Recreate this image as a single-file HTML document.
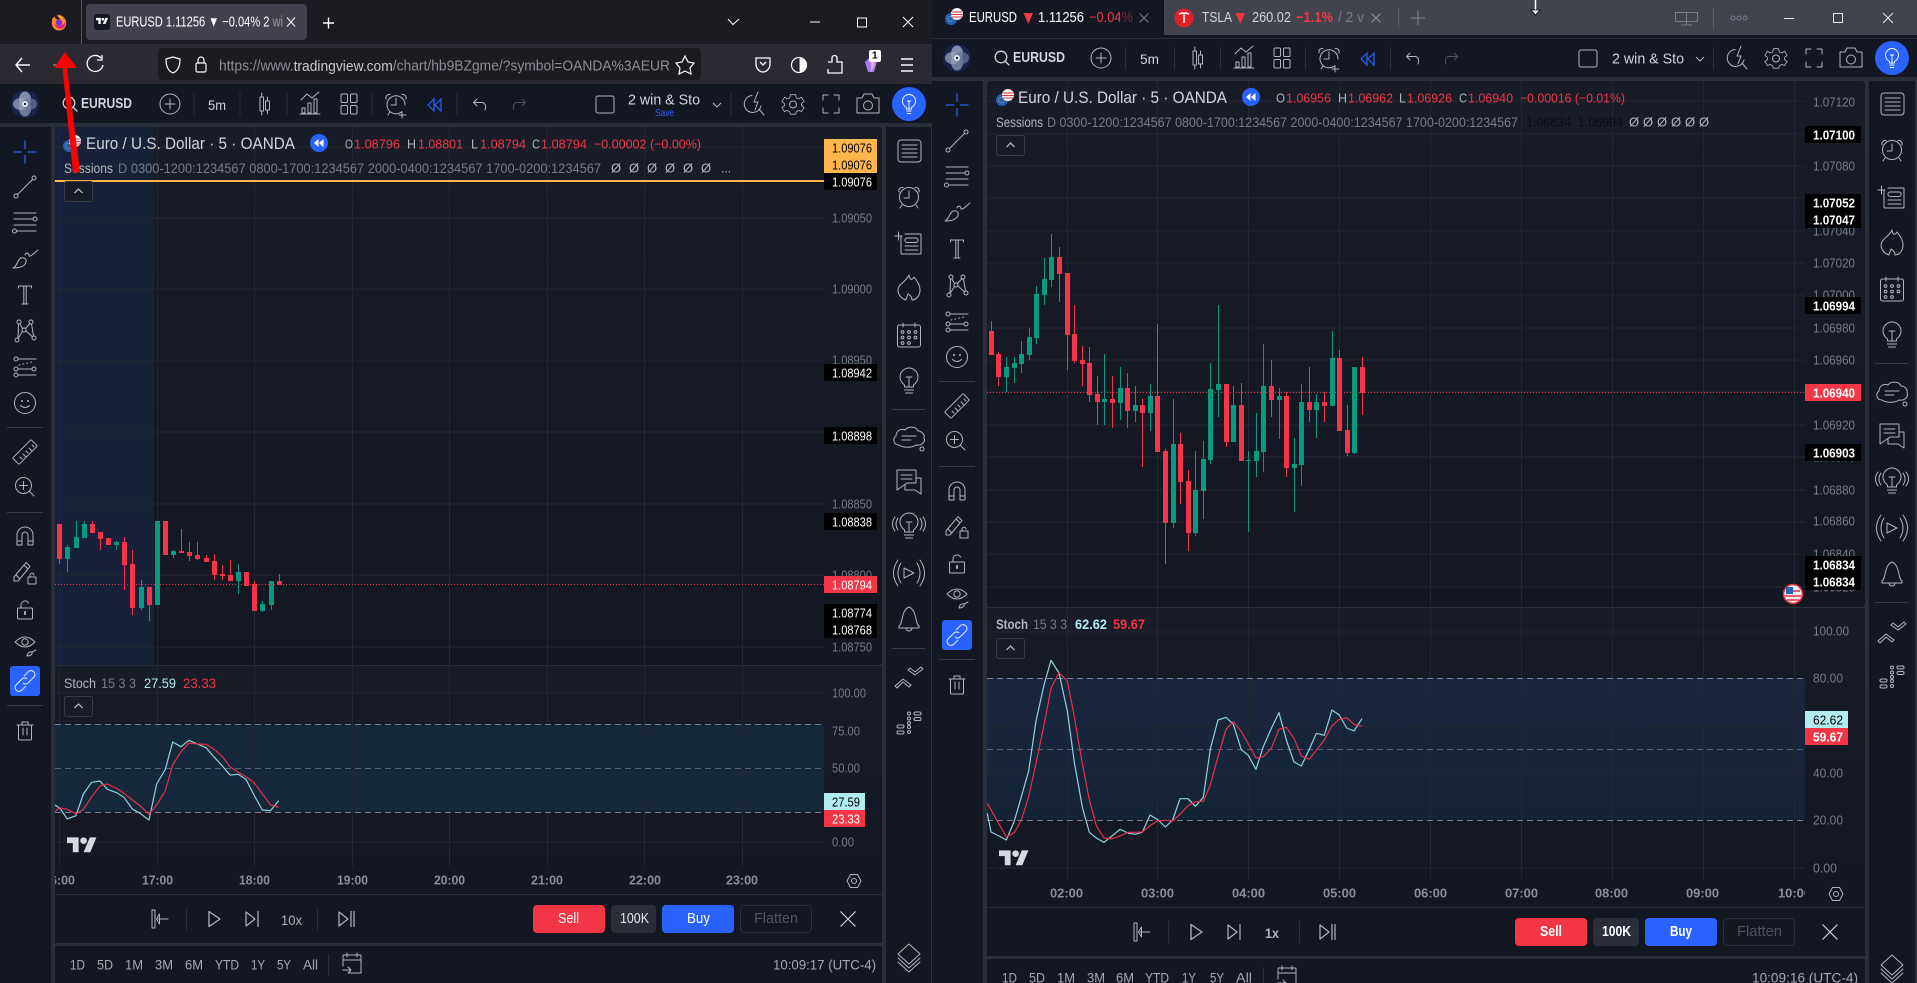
<!DOCTYPE html>
<html><head><meta charset="utf-8"><title>TradingView</title>
<style>
html,body{margin:0;padding:0;background:#131722;width:1917px;height:983px;overflow:hidden}
svg{display:block}
text{font-family:"Liberation Sans",sans-serif;font-size:13px;dominant-baseline:central;fill:#787b86;white-space:pre}
.i{fill:none;stroke:#b2b5be;stroke-width:1;stroke-linejoin:round;stroke-linecap:round}
.k{fill:#000}.wt{fill:#fff}.rd{fill:#f23645}.lt{fill:#b2b5be}.dk{fill:#131722}.tm{fill:#8b8e98;font-weight:bold}
.bb{fill:#a6a9b3;font-size:13.500px}
</style></head><body>
<svg width="1917" height="983" viewBox="0 0 1917 983" xmlns="http://www.w3.org/2000/svg">
<defs>
<linearGradient id="pg" x1="0" y1="0" x2="0" y2="1"><stop offset="0" stop-color="#181c27"/><stop offset="1" stop-color="#131722"/></linearGradient>
<linearGradient id="bd" x1="0" y1="0" x2="0" y2="1"><stop offset="0" stop-color="#18263f"/><stop offset="1" stop-color="#142434"/></linearGradient>
<g id="cross"><path fill="none" stroke="#2962ff" stroke-width="1.2" d="M-11.5 0H-3M3 0H11.5M0-11.5V-3M0 3V11.5"/></g>
<g id="line" class="i"><circle cx="-9" cy="9" r="2"/><circle cx="9" cy="-9" r="2"/><path d="M-7.6 7.6L7.6-7.6"/></g>
<g id="fib" class="i"><path d="M-11-9H11M-11-3H8M-11 3H11M-8 9H11"/><circle cx="10" cy="-3" r="2"/><circle cx="-10.500" cy="9" r="2"/></g>
<g id="brush" class="i"><path d="M-12 8C-8 7-8 0-4-2C-1-3 2-1 1 2C0 6-4 8-12 8Z"/><path d="M0-5C1-8 4-7 4-4C6-3 9-7 13-10"/></g>
<g id="T" class="i"><path d="M-6.500-7V-9H6.500V-7M-1.200-9V9M1.200-9V9M-3 9H3"/></g>
<g id="patt" class="i"><circle cx="-8" cy="10" r="2"/><circle cx="-6" cy="-8" r="2"/><circle cx="6" cy="-8" r="2"/><circle cx="9" cy="8" r="2"/><circle cx="-1" cy="0" r="2"/><path d="M-7 8L-6.500-6M-5-6L-2.500-1.500M-7 8.500L-2.500 1.500M.5-1.500L5-6.500M.8 .8L7.500 7M6.500-6L8.500 6"/></g>
<g id="fore" class="i"><circle cx="-9" cy="-8" r="2"/><circle cx="-9" cy="2" r="2"/><circle cx="-9" cy="8" r="2"/><circle cx="9" cy="2" r="2"/><path d="M-7-8H11M-7 2H7M-7 8H11"/><path stroke-dasharray="1 3" d="M-6-2L7-5"/></g>
<g id="smile" class="i"><circle r="10.500"/><path d="M-4.500 2.500Q0 6.500 4.500 2.500"/><circle cx="-3" cy="-2" r=".5"/><circle cx="3" cy="-2" r=".5"/></g>
<g id="ruler" class="i"><rect x="-13" y="-4.500" width="26" height="9" rx="1" transform="rotate(-45)"/><path d="M-5 5L-3 7M-2 2L1 5M1-1L3 1M4-4L7-1M7-7L9-5"/></g>
<g id="zoom" class="i"><circle cx="-1.500" cy="-1.500" r="8"/><path d="M4.500 4.500L9 9M-5.500-1.500H2.500M-1.500-5.500V2.500"/></g>
<g id="mag" class="i"><path d="M-8 9V-1A8 8 0 0 1 8-1V9H3V-1A3 3 0 0 0-3-1V9ZM-8 5H-3M3 5H8"/></g>
<g id="plock" class="i"><path d="M-11 5L-11 9L-7 9L3-3L-1-7ZM-9 3L-5 7M-1-7L1-9.500L5-5.500L3-3"/><rect x="3" y="5" width="8" height="7"/><path d="M5 5V3.500A2 2 0 0 1 9 3"/></g>
<g id="lock" class="i"><rect x="-7.500" y="-2" width="15" height="11" rx="1"/><path d="M-4-2V-5A4 4 0 0 1 3.500-7"/><path d="M0 2V4" stroke-width="2"/></g>
<g id="eye" class="i"><path d="M-10-3Q0-13 10-3Q0 7-10-3Z"/><circle cy="-3" r="3.200"/><path d="M2 11Q3 6 7 7L7 9Q5 11 2 11ZM7 7L11 5"/></g>
<g id="link" fill="none" stroke="#fff" stroke-opacity=".85" stroke-width="1.1"><path d="M-1-5L3-9A3.500 3.500 0 0 1 9-4L3 2A3.500 3.500 0 0 1-2 2"/><path d="M1 5L-3 9A3.500 3.500 0 0 1-9 4L-3-2A3.500 3.500 0 0 1 2-2"/></g>
<g id="trash" class="i"><path d="M-8-6H8M-3-6V-9H3V-6M-6.500-6V8A1 1 0 0 0-5.500 9H5.500A1 1 0 0 0 6.500 8V-6M-2-3V4M2-3V4"/></g>
<g id="wl" class="i"><rect x="-11" y="-11" width="23" height="22" rx="3"/><path d="M-7-6H8M-7-2H8M-7 2H8M-7 6H8"/></g>
<g id="alarm" class="i"><circle cy="0" r="9.500"/><path d="M0-6V1H-5M-10-5A3.500 3.500 0 0 1-6-9.500M10-5A3.500 3.500 0 0 0 6-9.500M-7 8L-9 11M7 8L9 11"/></g>
<g id="note" class="i"><path d="M-8-7V10A1 1 0 0 0-7 11H11A1 1 0 0 0 12 10V-8A1 1 0 0 0 11-9H-4"/><rect x="-4" y="-5" width="13" height="4.500" rx="2"/><path d="M-4 3H9M-4 7H9M-14-7H-7M-10.500-11V-3"/></g>
<g id="fire" class="i"><path d="M0-13C1-7 3-8 5-11C8-7 11-3 11 2C11 8 7 12 3 12C3 9 1 7-1 6C-2 9-3 11-3 12C-7 11-11 7-11 2C-11-4-3-6 0-13Z"/></g>
<g id="cal" class="i"><rect x="-11.500" y="-10" width="23" height="22" rx="2"/><path d="M-6-12V-8M6-12V-8"/><circle cx="-6.500" cy="-3" r="1.400"/><circle cy="-3" r="1.400"/><circle cx="6.500" cy="-3" r="1.400"/><circle cx="-6.500" cy="2.500" r="1.400"/><circle cy="2.500" r="1.400"/><circle cx="6.500" cy="2.500" r="1.400"/><circle cx="-6.500" cy="8" r="1.400"/><circle cy="8" r="1.400"/></g>
<g id="bulb" class="i"><path d="M-4.500 6V4C-7 2-9-1-9-4A9 9 0 0 1 9-4C9-1 7 2 4.500 4V6ZM-4.500 9H4.500M-3.500 12H3.500M-3-4H3M0-4V6"/></g>
<g id="cloud" class="i"><path d="M-10 8C-15 8-17 2-13-1C-13-6-8-9-4-7C-1-11 7-11 9-6C13-6 16-2 15 1C17 5 12 9 7 8C3 11-6 11-10 8Z"/><path d="M-7-1H7M-7 3H2"/><circle cx="13" cy="12" r="2"/></g>
<g id="chat" class="i"><path d="M-12-12H6A1 1 0 0 1 7-11V1H-2L-12 8Z"/><path d="M-8-7H3M-8-3H3M7-4H12V12L6 8H-4V3"/></g>
<g id="bulbw" class="i"><use href="#bulb" transform="translate(0,-1)"/><path d="M-11-9Q-15-3-11 3M-14-10Q-19-3-14 4M11-9Q15-3 11 3M14-10Q19-3 14 4"/></g>
<g id="playw" class="i"><path d="M-5-5V5L5 0Z"/><path d="M-8-10Q-14 0-8 10M-11-13Q-20 0-11 13M8-10Q14 0 8 10M11-13Q20 0 11 13"/></g>
<g id="bell" class="i"><path d="M-10 9H10V7C6 5 8-9 0-12C-8-9-6 5-10 7ZM-3 9A3 3 0 0 0 3 9"/></g>
<g id="chev" class="i"><path d="M-14 9L-6 2L2 8L0 10L-6 5L-12 11ZM-1-7L6-2L14-8L12-10L6-5L1-9Z"/></g>
<g id="dots" class="i"><rect x="-12" y="2" width="7" height="3" rx="1.500"/><rect x="-12" y="8" width="7" height="3" rx="1.500"/><circle cx="0" cy="-9.500" r="1.500"/><circle cx="0" cy="-4.500" r="1.500"/><circle cx="0" cy="0" r="1.500"/><circle cx="0" cy="4" r="1.500"/><circle cx="0" cy="9" r="1.500"/><rect x="5" y="-11" width="7" height="3" rx="1.500"/><rect x="5" y="-5.500" width="7" height="3" rx="1.500"/></g>
<g id="layers" class="i"><path d="M0-13L11-3L0 7L-11-3ZM-11 1L0 11L11 1M-11 5L0 15L11 5"/></g>
<g id="hex" class="i"><path d="M-7 0L-3.500-6.500H3.500L7 0L3.500 6.500H-3.500Z" /><circle r="2.500"/></g>
<g id="collapse"><rect x=".5" y=".5" width="28" height="20" rx="2" fill="#181c27" stroke="#363a45"/><path d="M10.500 12L14.500 8L18.500 12" fill="none" stroke="#b2b5be" stroke-width="1.300"/></g>
<g id="rewind"><circle r="9" fill="#2962ff"/><path d="M-.5-4L-5 0L-.5 4ZM4.500-4L0 0L4.500 4Z" fill="#fff"/></g>
<g id="flag"><circle cx="-3" cy="2" r="6" fill="#1f5fb4"/><circle cx="-3.500" cy="2" r="2.800" fill="none" stroke="#e3c52f" stroke-width=".8" stroke-dasharray="1 1.200"/><circle cx="3" cy="-3" r="6" fill="#f7f7f7"/><path d="M-2-5H8M-3-2.500H9M-2 0H8" stroke="#e5343f" stroke-width="1.100"/></g>
<g id="logo"><circle r="14" fill="#18224a"/><ellipse cy="-4.500" rx="6" ry="8" fill="#828ba8"/><ellipse cy="4.500" rx="6" ry="8" fill="#707a9b"/><ellipse cx="-4.500" rx="7.500" ry="6" fill="#a1a9c0" fill-opacity=".7"/><ellipse cx="4.500" rx="7.500" ry="6" fill="#6c7698" fill-opacity=".7"/><circle r="3" fill="#e6e9f2"/><circle r="1.200" fill="#18224a"/></g>
<g id="search" class="i"><circle cx="-1" cy="-1" r="5.800" stroke="#d1d4dc" stroke-width="1.300"/><path d="M3.200 3.200L7 7" stroke="#d1d4dc" stroke-width="1.300"/></g>
<g id="plusc" class="i"><circle r="10"/><path d="M-5 0H5M0-5V5"/></g>
<g id="candle" class="i"><rect x="-4" y="-7" width="3.500" height="14"/><rect x="1.500" y="-3" width="4" height="9" /><path d="M-2.200-11V-7M-2.200 7V11M3.500-7V-3M3.500 6V10"/></g>
<g id="indi" class="i"><path d="M-10-4L-4-10L1-6L8-12M-9 9V4H-6V9ZM-3 9V-1H0V9ZM3 9V-5H6V9ZM-11 10H9" /></g>
<g id="lay" class="i"><rect x="-8" y="-10" width="6.500" height="8.500" rx="1"/><rect x="1.500" y="-10" width="6.500" height="8.500" rx="1"/><rect x="-8" y="1.500" width="6.500" height="8.500" rx="1"/><rect x="1.500" y="1.500" width="6.500" height="8.500" rx="1"/></g>
<g id="alert" class="i"><path d="M6 7.500A9 9 0 1 1 9 1M0-6V1H-5M-10-5A3.500 3.500 0 0 1-6-9.500M10-5A3.500 3.500 0 0 0 6-9.500M-6 8L-8 11M6 8V14M3 11H10"/></g>
<g id="rep" fill="none" stroke="#2962ff" stroke-width="1.200"><path d="M-1-6L-7 0L-1 6ZM6-6L0 0L6 6Z"/></g>
<g id="undo" class="i"><path d="M-3-5L-6.500-1.500L-3 2M-6.500-1.500H2C5-1.500 6.500 2 5 6"/></g>
<g id="redo" fill="none" stroke="#50535e" stroke-width="1"><path d="M3-5L6.500-1.500L3 2M6.500-1.500H-2C-5-1.500-6.500 2-5 6"/></g>
<g id="flash" class="i"><path d="M7 2A8.500 8.500 0 1 1-2-8.500M4-12L0-2H4L1 6M5 5L10 11"/></g>
<g id="gear" class="i"><path d="M-3-11H3L4-7L7-6L10-8L13-3L10-.5V2L13 4L10 9L7 7.500L4 9L3 12H-3L-4 9L-7 7.500L-10 9L-13 4L-10 2V-.5L-13-3L-10-8L-7-6L-4-7Z" transform="scale(.85)"/><circle cy=".5" r="3.500"/></g>
<g id="full" class="i"><path d="M-8-4V-9H-3M3-9H8V-4M8 4V9H3M-3 9H-8V4"/></g>
<g id="cam" class="i"><path d="M-11-6H-6L-4-10H4L6-6H11V9H-11Z"/><circle cy="1.500" r="4.500"/></g>
<g id="bulbb"><circle r="17" fill="#2962ff"/><path d="M-2.500 5V3.500C-5 2-6.500-.5-6.500-3A6.500 6.500 0 0 1 6.500-3C6.500-.5 5 2 2.500 3.500V5ZM-2.500 7H2.500M-2 9.500H2M-2-3H2M0-3V5" fill="none" stroke="#fff" stroke-width=".9"/></g>
<g id="rp1" class="i"><rect x="-8" y="-9" width="3" height="18" /><path d="M-.5-5L-3.500 0L-.5 5ZM-2 0H8"/></g>
<g id="rp2" class="i"><path d="M-5-7.500V7.500L6 0Z" stroke-width="1.300"/></g>
<g id="rp3" class="i"><path d="M-6-7V7L3 0ZM6-7.500V7.500" stroke-width="1.200"/></g>
<g id="rp4" class="i"><path d="M-7-7V7L2 0ZM5-7.500V7.500M8-7.500V7.500" stroke-width="1.200"/></g>
<g id="xx"><path d="M-7.500-7.500L7.500 7.500M7.500-7.500L-7.500 7.500" fill="none" stroke="#d1d4dc" stroke-width="1.200"/></g>
<g id="calb" class="i"><path d="M-8-9H8A1 1 0 0 1 9-8V9H-4M-9 2V-8A1 1 0 0 1-8-9M-9-4H9M-5-11V-7M5-11V-7M-9 6H-1M-4 3L-1 6L-4 9"/></g>
<g id="tv"><path d="M14 22H7V11H0V4h14v18zM28 22h-8l7.500-18h8L28 22z"/><circle cx="20" cy="8" r="4"/></g>
</defs>

<!-- LEFT WINDOW BASE -->
<rect width="932" height="983" fill="#2a2e39"/>
<rect width="932" height="44" fill="#1c1b22"/>
<rect y="44" width="932" height="40" fill="#2b2a33"/>
<rect y="84" width="932" height="39" fill="#131722"/>
<rect y="127" width="51" height="856" fill="#131722"/>
<rect x="886" y="127" width="45" height="856" fill="#131722"/>

<!-- browser tabs -->
<rect x="81" y="0" width="1" height="44" fill="#55545c"/>
<g transform="translate(59,22.500)"><path d="M-7-2C-8 3-5 8 0 8C5 8 8 4 7-1C6-5 3-7 0-8C2-5 1-3-1-3C-3-3-4-4-4-6C-6-5-7-4-7-2Z" fill="#ff8a2c"/><path d="M-5 1C-4 5 0 7 3 6C6 5 7 2 6-1C5 2 2 3-1 3C-3 3-4 2-5 1Z" fill="#d92d7a"/><circle cx="0" cy="0" r="3.200" fill="#7b2fd4"/><path d="M-2-8C-1-5 1-4 3-4C2-6 0-7-2-8Z" fill="#ffc53a"/></g>
<rect x="86" y="4" width="221" height="36" rx="4" fill="#42414d"/>
<rect x="94" y="14" width="16" height="16" rx="3" fill="#131722"/>
<use href="#tv" transform="translate(96,16.500) scale(.34)" fill="#fff"/>
<text x="116" y="22.500" textLength="167" lengthAdjust="spacingAndGlyphs" style="fill:#fbfbfe;font-size:14.500px">EURUSD 1.11256 ▼ −0.04% 2 wi</text>
<rect x="270" y="8" width="15" height="28" fill="#42414d" fill-opacity=".55"/>
<path d="M287 17.500L295 26.500M295 17.500L287 26.500" stroke="#fbfbfe" stroke-width="1"/>
<path d="M323 23H334M328.500 17.500V28.500" stroke="#fbfbfe" stroke-width="1.400"/>
<path d="M728 19L733 24.500L739 19" fill="none" stroke="#fbfbfe" stroke-width="1"/>
<path d="M810 22H820" stroke="#fbfbfe" stroke-width="1"/>
<rect x="857.500" y="18" width="9" height="9" fill="none" stroke="#fbfbfe"/>
<path d="M903 17L913 27M913 17L903 27" stroke="#fbfbfe"/>

<!-- nav bar -->
<path d="M30 65H16M22 58L16 65L22 72" fill="none" stroke="#fbfbfe" stroke-width="1.400"/>
<path d="M53 65H66" stroke="#8b8a92" stroke-width="1.400"/>
<path d="M101 58A8 8 0 1 0 103 65M102 55V60H97" fill="none" stroke="#fbfbfe" stroke-width="1.300"/>
<rect x="158" y="48" width="543" height="32" rx="4" fill="#1c1b22"/>
<path d="M173 57L180 59C180 66 178 71 173 73C168 71 166 66 166 59Z" fill="none" stroke="#fbfbfe" stroke-width="1.200"/>
<rect x="196" y="63" width="10" height="9" rx="1.500" fill="none" stroke="#fbfbfe" stroke-width="1.200"/><path d="M198 63V60A3 3 0 0 1 204 60V63" fill="none" stroke="#fbfbfe" stroke-width="1.200"/>
<text x="219" y="66" textLength="451" lengthAdjust="spacingAndGlyphs" style="fill:#8e8d94;font-size:15px">https://www.<tspan style="fill:#c8c8cc">tradingview.com</tspan>/chart/hb9BZgme/?symbol=OANDA%3AEUR</text>
<path d="M685 56L688 62L694 63L690 68L691 74L685 71L679 74L680 68L676 63L682 62Z" fill="none" stroke="#fbfbfe" stroke-width="1.200"/>
<path d="M756 58H770V64C770 69 766 72 763 72C760 72 756 69 756 64Z" fill="none" stroke="#fbfbfe" stroke-width="1.300"/><path d="M760 62L763 65L766 62" fill="none" stroke="#fbfbfe" stroke-width="1.300"/>
<circle cx="799" cy="65" r="7.500" fill="none" stroke="#fbfbfe" stroke-width="1.200"/><path d="M799 58A7 7 0 0 1 799 72Z" fill="#fbfbfe"/><path d="M799 58V72" stroke="#1c1b22"/>
<path d="M828 62H832V58A2 2 0 0 1 837 58V62H842V73H828V69" fill="none" stroke="#fbfbfe" stroke-width="1.300"/>
<path d="M871 56L877 62L874 72L868 72L865 62Z" fill="#a37df0"/><path d="M871 58L875 64L871 72Z" fill="#f0a9d8"/>
<rect x="869" y="50" width="12" height="12" rx="2" fill="#fff"/><text x="872" y="56" style="fill:#000;font-size:10px;font-weight:bold">1</text>
<path d="M901 59H913M901 65H913M901 71H913" stroke="#fbfbfe" stroke-width="1.400"/>

<!-- top bar left -->
<use href="#logo" x="25" y="104"/>
<use href="#search" x="70" y="104"/>
<text x="81" y="104" textLength="51" lengthAdjust="spacingAndGlyphs" style="fill:#d1d4dc;font-size:14.500px;font-weight:bold">EURUSD</text>
<use href="#plusc" x="170" y="104"/>
<path d="M194 93V116M240 93V116M287 93V116M372 93V116M457 93V116M731 93V116" stroke="#2a2e39"/>
<text x="208" y="105" textLength="18" lengthAdjust="spacingAndGlyphs" style="fill:#d1d4dc;font-size:14px">5m</text>
<use href="#candle" x="264" y="104"/><use href="#indi" x="311" y="104"/><use href="#lay" x="349" y="104"/><use href="#alert" x="396" y="104"/><use href="#rep" x="435" y="105"/><use href="#undo" x="480" y="104"/><use href="#redo" x="519" y="104"/>
<rect x="596" y="96" width="18" height="17" rx="2" fill="none" stroke="#b2b5be"/>
<text x="628" y="100" textLength="72" lengthAdjust="spacingAndGlyphs" style="fill:#d1d4dc;font-size:15px">2 win &amp; Sto</text>
<text x="655" y="113" textLength="19" lengthAdjust="spacingAndGlyphs" style="fill:#2962ff;font-size:10.500px">Save</text>
<path d="M713 103L717 107L721 103" fill="none" stroke="#b2b5be"/>
<use href="#flash" x="754" y="104"/><use href="#gear" x="793" y="104"/><use href="#full" x="831" y="104"/><use href="#cam" x="868" y="104"/><use href="#bulbb" x="909" y="104"/>

<!-- LEFT CHART -->
<rect x="55" y="127" width="827" height="538" rx="3" fill="url(#pg)"/>
<rect x="55" y="666" width="827" height="228" fill="#131722"/>
<rect x="55" y="666" width="827" height="200" fill="url(#pg)"/>
<rect x="55" y="127" width="99" height="538" fill="#17223a"/>
<rect x="55" y="724" width="769" height="88" fill="#15273a"/>
<path d="M55 147H824M55 218H824M55 289H824M55 361H824M55 432H824M55 504H824M55 575H824M55 647H824M55 693H824M55 730H824M55 805H824M55 842H824" stroke="#232733" shape-rendering="crispEdges"/>
<path d="M59.500 127V866M157.500 127V866M254.500 127V866M352.500 127V866M449.500 127V866M547.500 127V866M644.500 127V866M742.500 127V866" stroke="#232733" shape-rendering="crispEdges"/>
<path d="M55 665.500H882M55 894.500H882" stroke="#2a2e39" shape-rendering="crispEdges"/>
<path d="M55 724.500H824M55 812.500H824" stroke="#7d808a" stroke-dasharray="6 4" shape-rendering="crispEdges"/>
<path d="M55 768.500H824" stroke="#5a6170" stroke-dasharray="6 4" shape-rendering="crispEdges"/>
<path d="M55 181H824" stroke="#ffb74d" stroke-width="2" shape-rendering="crispEdges"/>
<path d="M55 584.500H824" stroke="#f23645" stroke-dasharray="1 2" shape-rendering="crispEdges"/>
<g transform="translate(40,500) scale(.33333)" fill="none" shape-rendering="crispEdges">
<path stroke="#f5344a" stroke-width="3" d="M58 72V192M157 63V99M181 96V150M253 111V270M277 150V345M328 261V363M424 87V159M448 126V183M472 126V180M499 165V186M523 162V240M547 195V240M571 180V243M643 243V333M718 222V255"/>
<path stroke="#f5344a" stroke-width="15" d="M58 72V177M157 72V99M181 96V117M205 114V135M253 126V195M277 192V324M328 261V315M376 63V165M424 153V159M448 156V168M472 165V177M499 174V186M523 183V225M547 222V228M571 225V243M619 216V258M643 252V333M718 243V255"/>
<path stroke="#089981" stroke-width="3" d="M82 135V216M109 63V144M133 63V114M229 123V150M304 240V330M400 150V174M595 192V282M667 303V336M694 243V330"/>
<path stroke="#089981" stroke-width="15" d="M82 141V177M109 111V144M133 72V114M229 126V135M304 261V324M352 63V315M400 153V165M595 216V243M667 312V333M694 243V315"/>
</g>
<g transform="translate(0,480) scale(.33333)" fill="none" stroke-width="3.600" stroke-linejoin="round">
<polyline stroke="#8fd3dc" points="165,975 180,985 202,1017 228,1007 250,942 275,907 300,903 322,928 350,938 372,952 397,987 420,1000 447,1020 470,912 496,868 518,786 543,800 567,781 592,792 618,803 643,832 667,858 690,885 715,883 738,898 762,945 787,990 812,992 836,962"/>
<polyline stroke="#e83047" points="165,995 178,983 202,988 228,1002 250,988 275,950 300,918 322,912 350,925 372,940 397,960 420,977 447,1003 470,975 496,932 518,855 543,815 567,789 592,792 618,793 643,808 667,830 690,860 715,877 738,890 762,908 787,942 812,975 836,982"/>
</g>
<!-- legend L -->
<use href="#flag" x="72" y="144"/>
<text x="86" y="144" textLength="209" lengthAdjust="spacingAndGlyphs" style="fill:#d1d4dc;font-size:16.500px">Euro / U.S. Dollar · 5 · OANDA</text>
<use href="#rewind" x="319" y="143"/>
<text x="345" y="144" class="lt" textLength="8" lengthAdjust="spacingAndGlyphs">O</text><text x="354" y="144" class="rd" textLength="46" lengthAdjust="spacingAndGlyphs">1.08796</text>
<text x="407" y="144" class="lt" textLength="9" lengthAdjust="spacingAndGlyphs">H</text><text x="418" y="144" class="rd" textLength="45" lengthAdjust="spacingAndGlyphs">1.08801</text>
<text x="471" y="144" class="lt" textLength="7" lengthAdjust="spacingAndGlyphs">L</text><text x="480" y="144" class="rd" textLength="46" lengthAdjust="spacingAndGlyphs">1.08794</text>
<text x="532" y="144" class="lt" textLength="8" lengthAdjust="spacingAndGlyphs">C</text><text x="541" y="144" class="rd" textLength="46" lengthAdjust="spacingAndGlyphs">1.08794</text>
<text x="594" y="144" class="rd" textLength="107" lengthAdjust="spacingAndGlyphs">−0.00002 (−0.00%)</text>
<text x="64" y="168" class="lt" textLength="49" lengthAdjust="spacingAndGlyphs" style="font-size:14px">Sessions</text>
<text x="118" y="168" textLength="483" lengthAdjust="spacingAndGlyphs" style="font-size:14px">D 0300-1200:1234567 0800-1700:1234567 2000-0400:1234567 1700-0200:1234567</text>
<text x="611 620 629 638 647 656 665 674 683 692 701" y="168" class="lt">Ø Ø Ø Ø Ø Ø</text>
<text x="721" y="168" class="lt" textLength="10" lengthAdjust="spacingAndGlyphs">...</text>
<use href="#collapse" x="64" y="181"/>
<!-- prices L -->
<text x="832" y="218" textLength="40" lengthAdjust="spacingAndGlyphs">1.09050</text>
<text x="832" y="289" textLength="40" lengthAdjust="spacingAndGlyphs">1.09000</text>
<text x="832" y="360" textLength="40" lengthAdjust="spacingAndGlyphs">1.08950</text>
<text x="832" y="504" textLength="40" lengthAdjust="spacingAndGlyphs">1.08850</text>
<text x="832" y="575" textLength="40" lengthAdjust="spacingAndGlyphs">1.08800</text>
<text x="832" y="647" textLength="40" lengthAdjust="spacingAndGlyphs">1.08750</text>
<rect x="824" y="139" width="53" height="34" fill="#ffb74d"/>
<rect x="824" y="173" width="53" height="17" fill="#000"/>
<rect x="824" y="364" width="53" height="17" fill="#000"/>
<rect x="824" y="427" width="53" height="17" fill="#000"/>
<rect x="824" y="513" width="53" height="17" fill="#000"/>
<rect x="824" y="576" width="53" height="17" fill="#f23645"/>
<rect x="824" y="604" width="53" height="34" fill="#000"/>
<text x="832" y="148" class="k" textLength="40" lengthAdjust="spacingAndGlyphs">1.09076</text>
<text x="832" y="165" class="k" textLength="40" lengthAdjust="spacingAndGlyphs">1.09076</text>
<text x="832" y="182" class="wt" textLength="40" lengthAdjust="spacingAndGlyphs">1.09076</text>
<text x="832" y="373" class="wt" textLength="40" lengthAdjust="spacingAndGlyphs">1.08942</text>
<text x="832" y="436" class="wt" textLength="40" lengthAdjust="spacingAndGlyphs">1.08898</text>
<text x="832" y="522" class="wt" textLength="40" lengthAdjust="spacingAndGlyphs">1.08838</text>
<text x="832" y="585" class="wt" textLength="40" lengthAdjust="spacingAndGlyphs">1.08794</text>
<text x="832" y="613" class="wt" textLength="40" lengthAdjust="spacingAndGlyphs">1.08774</text>
<text x="832" y="630" class="wt" textLength="40" lengthAdjust="spacingAndGlyphs">1.08768</text>
<!-- stoch L -->
<text x="64" y="683" class="lt" textLength="32" lengthAdjust="spacingAndGlyphs" style="font-size:14px">Stoch</text>
<text x="101" y="683" textLength="35" lengthAdjust="spacingAndGlyphs" style="font-size:14px">15 3 3</text>
<text x="144" y="683" style="fill:#b2ebf2;font-size:14px" textLength="32" lengthAdjust="spacingAndGlyphs">27.59</text>
<text x="183" y="683" class="rd" textLength="33" lengthAdjust="spacingAndGlyphs" style="font-size:14px">23.33</text>
<use href="#collapse" x="64" y="696"/>
<use href="#tv" transform="translate(67,834) scale(.83)" fill="#d8d9e0"/>
<text x="832" y="693" textLength="34" lengthAdjust="spacingAndGlyphs">100.00</text>
<text x="832" y="731" textLength="28" lengthAdjust="spacingAndGlyphs">75.00</text>
<text x="832" y="768" textLength="28" lengthAdjust="spacingAndGlyphs">50.00</text>
<text x="832" y="842" textLength="22" lengthAdjust="spacingAndGlyphs">0.00</text>
<rect x="824" y="793" width="41" height="17" fill="#b2ebf2"/><rect x="824" y="810" width="41" height="17" fill="#f23645"/>
<text x="832" y="802" class="k" textLength="28" lengthAdjust="spacingAndGlyphs">27.59</text>
<text x="832" y="819" class="wt" textLength="28" lengthAdjust="spacingAndGlyphs">23.33</text>
<!-- time L -->
<text x="43" y="880" class="tm" textLength="32" lengthAdjust="spacingAndGlyphs">16:00</text>
<text x="142" y="880" class="tm" textLength="31" lengthAdjust="spacingAndGlyphs">17:00</text>
<text x="239" y="880" class="tm" textLength="31" lengthAdjust="spacingAndGlyphs">18:00</text>
<text x="337" y="880" class="tm" textLength="31" lengthAdjust="spacingAndGlyphs">19:00</text>
<text x="434" y="880" class="tm" textLength="31" lengthAdjust="spacingAndGlyphs">20:00</text>
<text x="531" y="880" class="tm" textLength="32" lengthAdjust="spacingAndGlyphs">21:00</text>
<text x="629" y="880" class="tm" textLength="32" lengthAdjust="spacingAndGlyphs">22:00</text>
<text x="726" y="880" class="tm" textLength="32" lengthAdjust="spacingAndGlyphs">23:00</text>
<rect x="0" y="866" width="51" height="28" fill="#131722"/><rect x="51" y="866" width="4" height="28" fill="#2a2e39"/>
<use href="#hex" x="854" y="881"/>
<!-- replay L -->
<rect x="55" y="895" width="827" height="48" fill="#131722"/>
<rect x="55" y="946" width="827" height="37" fill="#131722"/>
<use href="#rp1" x="160" y="919"/><use href="#rp2" x="214" y="919"/><use href="#rp3" x="252" y="919"/><use href="#rp4" x="346" y="919"/>
<path d="M186.500 908V930M317.500 908V930" stroke="#2a2e39"/>
<text x="281" y="920" style="fill:#b2b5be;font-size:14px" textLength="21" lengthAdjust="spacingAndGlyphs">10x</text>
<rect x="533" y="905" width="72" height="28" rx="4" fill="#f23645"/>
<rect x="611" y="905" width="45" height="28" rx="4" fill="#2a2e39"/>
<rect x="662" y="905" width="72" height="28" rx="4" fill="#2962ff"/>
<rect x="740.500" y="905.500" width="71" height="27" rx="4" fill="none" stroke="#2a2e39"/>
<text x="558" y="919" class="wt" style="font-size:14.500px" textLength="21" lengthAdjust="spacingAndGlyphs">Sell</text>
<text x="620" y="919" style="fill:#e3e4e8;font-size:14.500px" textLength="29" lengthAdjust="spacingAndGlyphs">100K</text>
<text x="687" y="919" class="wt" style="font-size:14.500px" textLength="23" lengthAdjust="spacingAndGlyphs">Buy</text>
<text x="754" y="919" style="fill:#50535e;font-size:14.500px" textLength="44" lengthAdjust="spacingAndGlyphs">Flatten</text>
<use href="#xx" x="848" y="919"/>
<!-- bottom L -->
<text x="70" y="965" class="bb" textLength="15" lengthAdjust="spacingAndGlyphs">1D</text>
<text x="97" y="965" class="bb" textLength="16" lengthAdjust="spacingAndGlyphs">5D</text>
<text x="125" y="965" class="bb" textLength="18" lengthAdjust="spacingAndGlyphs">1M</text>
<text x="155" y="965" class="bb" textLength="18" lengthAdjust="spacingAndGlyphs">3M</text>
<text x="185" y="965" class="bb" textLength="18" lengthAdjust="spacingAndGlyphs">6M</text>
<text x="215" y="965" class="bb" textLength="24" lengthAdjust="spacingAndGlyphs">YTD</text>
<text x="251" y="965" class="bb" textLength="14" lengthAdjust="spacingAndGlyphs">1Y</text>
<text x="277" y="965" class="bb" textLength="14" lengthAdjust="spacingAndGlyphs">5Y</text>
<text x="303" y="965" class="bb" textLength="15" lengthAdjust="spacingAndGlyphs">All</text>
<path d="M328.500 954V976" stroke="#2a2e39"/>
<use href="#calb" x="352" y="964"/>
<text x="773" y="965" class="bb" textLength="103" lengthAdjust="spacingAndGlyphs">10:09:17 (UTC-4)</text>

<!-- left toolbar L -->
<use href="#cross" x="25" y="152"/><use href="#line" x="25" y="187"/><use href="#fib" x="25" y="222"/><use href="#brush" x="25" y="260"/><use href="#T" x="25" y="295"/><use href="#patt" x="25" y="330"/><use href="#fore" x="25" y="367"/><use href="#smile" x="25" y="403"/>
<path d="M7 427.500H43M7 512.500H43M7 705.500H43" stroke="#363a45"/>
<use href="#ruler" x="25" y="452"/><use href="#zoom" x="25" y="487"/><use href="#mag" x="25" y="536"/><use href="#plock" x="25" y="572"/><use href="#lock" x="25" y="610"/><use href="#eye" x="25" y="645"/>
<rect x="10" y="666" width="30" height="30" rx="3" fill="#2962ff"/><use href="#link" x="25" y="681"/>
<use href="#trash" x="25" y="731"/>
<!-- right toolbar L -->
<use href="#wl" x="909" y="151"/><use href="#alarm" x="909" y="197"/><use href="#note" x="909" y="243"/><use href="#fire" x="909" y="288"/><use href="#cal" x="909" y="335"/><use href="#bulb" x="909" y="381"/>
<path d="M892 409.500H925M892 648.500H925" stroke="#363a45"/>
<use href="#cloud" x="909" y="437"/><use href="#chat" x="909" y="482"/><use href="#bulbw" x="909" y="527"/><use href="#playw" x="909" y="573"/><use href="#bell" x="909" y="619"/><use href="#chev" x="909" y="677"/><use href="#dots" x="909" y="723"/><use href="#layers" x="909" y="957"/>

<!-- red annotation arrow -->
<path d="M73 173L80 172L67 68H77L65 52L54 68H62.500Z" fill="#ff0000"/>

<!-- RIGHT WINDOW BASE -->
<rect x="932" y="0" width="985" height="983" fill="#2a2e39"/>
<rect x="932" y="0" width="985" height="35" fill="#41434d"/>
<rect x="932" y="0" width="232" height="35" fill="#131722"/>
<rect x="932" y="35" width="985" height="3" fill="#131722"/>
<path d="M932 38.500H1917" stroke="#2a2e39"/>
<rect x="932" y="39" width="985" height="38" fill="#131722"/>
<rect x="932" y="81" width="51" height="902" fill="#131722"/>
<rect x="1869" y="81" width="46" height="902" fill="#131722"/>

<use href="#flag" x="954" y="17"/>
<text x="969" y="18" class="wt" textLength="48" lengthAdjust="spacingAndGlyphs" style="font-size:14.500px">EURUSD</text>
<path d="M1023.500 13H1033L1028.300 24Z" fill="#f23645"/>
<text x="1038" y="18" class="wt" textLength="46" lengthAdjust="spacingAndGlyphs" style="font-size:14.500px">1.11256</text>
<text x="1089" y="18" class="rd" textLength="44" lengthAdjust="spacingAndGlyphs" style="font-size:14.500px">−0.04%</text>
<rect x="1120" y="8" width="14" height="20" fill="#131722" fill-opacity=".5"/>
<path d="M1139.500 13.500L1148.500 22.500M1148.500 13.500L1139.500 22.500" stroke="#787b86"/>
<circle cx="1184" cy="18" r="9.500" fill="#e3202a"/><path d="M1179 14Q1184 12 1189 14M1184 14V23" stroke="#fff" stroke-width="1.500" fill="none"/>
<text x="1202" y="18" style="fill:#d1d4dc;font-size:14.500px" textLength="30" lengthAdjust="spacingAndGlyphs">TSLA</text>
<path d="M1235.500 13H1245L1240.300 24Z" fill="#f23645"/>
<text x="1252" y="18" style="fill:#d1d4dc;font-size:14.500px" textLength="39" lengthAdjust="spacingAndGlyphs">260.02</text>
<text x="1296" y="18" class="rd" textLength="37" lengthAdjust="spacingAndGlyphs" style="font-size:14.500px;font-weight:bold">−1.1%</text>
<text x="1338" y="18" textLength="26" lengthAdjust="spacingAndGlyphs" style="font-size:14.500px">/ 2 v</text>
<path d="M1371.500 13.500L1380.500 22.500M1380.500 13.500L1371.500 22.500" stroke="#9598a1"/>
<path d="M1398.500 8V27" stroke="#5d606b"/>
<path d="M1411 18H1425M1418 11V25" stroke="#787b86" stroke-width="1.200"/>
<path d="M1535.500 0V10" stroke="#fff" stroke-width="1.500"/><path d="M1531 10H1540L1535.500 15Z" fill="#fff" stroke="#000" stroke-width=".8"/>
<path d="M1675.500 12.500H1697.500V21.500H1675.500ZM1686.500 12.500V25M1681 25H1692" fill="none" stroke="#787b86"/>
<path d="M1713.500 7V29" stroke="#5d606b"/>
<g fill="none" stroke="#787b86"><circle cx="1733" cy="18" r="2"/><circle cx="1739" cy="18" r="2"/><circle cx="1745" cy="18" r="2"/></g>
<path d="M1784 18.500H1794" stroke="#e6e6e8"/>
<rect x="1833.500" y="13.500" width="9" height="9" fill="none" stroke="#e6e6e8"/>
<path d="M1883 13L1893 23M1893 13L1883 23" stroke="#e6e6e8"/>

<use href="#logo" x="957" y="58"/>
<use href="#search" x="1002" y="58"/>
<text x="1013" y="58" textLength="52" lengthAdjust="spacingAndGlyphs" style="fill:#d1d4dc;font-size:14.500px;font-weight:bold">EURUSD</text>
<use href="#plusc" x="1101" y="58"/>
<path d="M1125.500 47V70M1174.500 47V70M1220.500 47V70M1305.500 47V70M1390.500 47V70M1713.500 47V70" stroke="#2a2e39"/>
<text x="1140" y="59" textLength="19" lengthAdjust="spacingAndGlyphs" style="fill:#d1d4dc;font-size:14px">5m</text>
<use href="#candle" x="1197" y="58"/><use href="#indi" x="1245" y="58"/><use href="#lay" x="1282" y="58"/><use href="#alert" x="1329" y="58"/><use href="#rep" x="1368" y="59"/><use href="#undo" x="1413" y="58"/><use href="#redo" x="1451" y="58"/>
<rect x="1579" y="50" width="18" height="17" rx="2" fill="none" stroke="#b2b5be"/>
<text x="1612" y="59" textLength="72" lengthAdjust="spacingAndGlyphs" style="fill:#d1d4dc;font-size:15px">2 win &amp; Sto</text>
<path d="M1696 57L1700 61L1704 57" fill="none" stroke="#b2b5be"/>
<use href="#flash" x="1737" y="58"/><use href="#gear" x="1776" y="58"/><use href="#full" x="1814" y="58"/><use href="#cam" x="1851" y="58"/><use href="#bulbb" x="1892" y="58"/>

<!-- RIGHT CHART -->
<rect x="987" y="81" width="878" height="526" rx="3" fill="url(#pg)"/>
<rect x="987" y="608" width="878" height="299" fill="#131722"/>
<rect x="987" y="608" width="878" height="271" fill="url(#pg)"/>
<rect x="987" y="678" width="818" height="142" fill="url(#bd)"/>
<path d="M987 101H1805M987 134H1805M987 166H1805M987 198H1805M987 231H1805M987 263H1805M987 295H1805M987 328H1805M987 360H1805M987 392H1805M987 425H1805M987 457H1805M987 490H1805M987 522H1805M987 554H1805M987 587H1805M987 632H1805M987 726H1805M987 773H1805M987 868H1805" stroke="#232733" shape-rendering="crispEdges"/>
<path d="M1067.500 81V879M1157.500 81V879M1248.500 81V879M1339.500 81V879M1430.500 81V879M1521.500 81V879M1612.500 81V879M1703.500 81V879M1794.500 81V879" stroke="#232733" shape-rendering="crispEdges"/>
<path d="M987 607.500H1865M987 907.500H1865" stroke="#2a2e39" shape-rendering="crispEdges"/>
<path d="M987 678.500H1805M987 820.500H1805" stroke="#7d808a" stroke-dasharray="6 4" shape-rendering="crispEdges"/>
<path d="M987 749.500H1805" stroke="#5a6170" stroke-dasharray="6 4" shape-rendering="crispEdges"/>
<path d="M987 392.500H1805" stroke="#f23645" stroke-dasharray="1 2" shape-rendering="crispEdges"/>
<g transform="translate(930,200) scale(.33333)" fill="none" shape-rendering="crispEdges">
<path stroke="#f5344a" stroke-width="3" d="M184 363V465M205 456V558M388 141V306M412 219V510M433 315V489M457 438V558M478 441V606M502 528V675M547 528V684M592 519V684M637 597V801M682 372V756M706 747V1092M751 699V912M775 810V1053M889 552V741M934 549V783M1024 480V651M1069 576V831M1138 501V666M1183 576V666M1228 450V693M1252 615V768M1297 471V645"/>
<path stroke="#f5344a" stroke-width="15" d="M184 393V465M205 462V531M388 171V222M412 219V405M433 402V483M457 480V492M478 489V585M502 582V606M547 597V609M592 564V633M637 615V639M682 588V756M706 753V969M751 732V846M775 843V999M889 552V726M934 615V783M1024 558V600M1069 588V804M1138 606V630M1183 606V618M1228 474V693M1252 690V759M1297 501V579"/>
<path stroke="#089981" stroke-width="3" d="M229 471V576M253 471V549M274 423V519M298 384V480M319 258V432M343 174V315M364 102V261M523 462V675M571 501V660M616 558V666M661 552V693M730 597V984M796 753V1008M820 723V957M841 489V792M865 315V651M910 558V726M955 753V996M979 639V831M1000 432V816M1048 564V717M1093 714V936M1114 552V858M1159 582V714M1207 393V618M1273 501V762"/>
<path stroke="#089981" stroke-width="15" d="M229 501V531M253 489V504M274 462V492M298 411V465M319 282V414M343 237V285M364 171V240M523 597V606M571 564V609M616 615V633M661 588V639M730 732V969M796 870V999M820 777V873M841 567V780M865 552V570M910 615V726M955 780V783M979 753V783M1000 558V756M1048 588V600M1093 792V804M1114 606V795M1159 606V630M1207 474V618M1273 501V759"/>
</g>
<g transform="translate(930,600) scale(.33333)" fill="none" stroke-width="3.600" stroke-linejoin="round">
<polyline stroke="#8fd3dc" points="172,640 183,696 207,708 229,720 253,663 274,590 296,513 318,363 342,255 363,181 387,219 412,333 433,487 457,621 478,697 499,714 522,727 546,708 570,688 594,699 616,703 637,697 660,645 682,658 706,681 728,660 750,596 774,596 796,619 820,592 841,447 864,360 888,352 910,373 934,449 955,466 978,508 1000,440 1024,385 1047,338 1069,420 1092,486 1114,498 1137,450 1159,400 1183,406 1206,330 1228,345 1250,384 1272,393 1296,356"/>
<polyline stroke="#e83047" points="172,610 229,711 253,698 274,660 296,590 318,490 342,375 363,265 387,218 412,243 433,350 455,480 478,600 499,677 522,714 546,717 570,708 594,697 616,697 637,696 660,677 682,663 706,661 728,663 750,643 774,617 796,605 820,604 841,555 864,470 888,388 910,365 934,395 955,432 978,474 1000,470 1024,445 1047,388 1069,382 1092,415 1114,468 1137,478 1159,451 1183,420 1206,378 1228,358 1250,353 1272,373 1296,379"/>
</g>
<!-- legend R -->
<use href="#flag" x="1005" y="98"/>
<text x="1018" y="98" textLength="209" lengthAdjust="spacingAndGlyphs" style="fill:#d1d4dc;font-size:16.500px">Euro / U.S. Dollar · 5 · OANDA</text>
<use href="#rewind" x="1251" y="97"/>
<text x="1276" y="98" class="lt" textLength="9" lengthAdjust="spacingAndGlyphs">O</text><text x="1286" y="98" class="rd" textLength="45" lengthAdjust="spacingAndGlyphs">1.06956</text>
<text x="1338" y="98" class="lt" textLength="9" lengthAdjust="spacingAndGlyphs">H</text><text x="1348" y="98" class="rd" textLength="45" lengthAdjust="spacingAndGlyphs">1.06962</text>
<text x="1399" y="98" class="lt" textLength="7" lengthAdjust="spacingAndGlyphs">L</text><text x="1407" y="98" class="rd" textLength="45" lengthAdjust="spacingAndGlyphs">1.06926</text>
<text x="1459" y="98" class="lt" textLength="8" lengthAdjust="spacingAndGlyphs">C</text><text x="1468" y="98" class="rd" textLength="45" lengthAdjust="spacingAndGlyphs">1.06940</text>
<text x="1520" y="98" class="rd" textLength="105" lengthAdjust="spacingAndGlyphs">−0.00016 (−0.01%)</text>
<text x="996" y="122" class="lt" textLength="47" lengthAdjust="spacingAndGlyphs" style="font-size:14px">Sessions</text>
<text x="1047" y="122" textLength="471" lengthAdjust="spacingAndGlyphs" style="font-size:14px">D 0300-1200:1234567 0800-1700:1234567 2000-0400:1234567 1700-0200:1234567</text>
<text x="1526" y="122" style="fill:#0a0c12" textLength="45" lengthAdjust="spacingAndGlyphs">1.06834</text>
<text x="1578" y="122" style="fill:#0a0c12" textLength="45" lengthAdjust="spacingAndGlyphs">1.06994</text>
<text x="1629 1636 1643 1650 1657 1664 1671 1678 1685 1692 1699" y="122" class="lt">Ø Ø Ø Ø Ø Ø</text>
<use href="#collapse" x="996" y="135"/>
<!-- prices R -->
<text x="1813" y="102" textLength="42" lengthAdjust="spacingAndGlyphs">1.07120</text>
<text x="1813" y="166" textLength="42" lengthAdjust="spacingAndGlyphs">1.07080</text>
<text x="1813" y="231" textLength="42" lengthAdjust="spacingAndGlyphs">1.07040</text>
<text x="1813" y="263" textLength="42" lengthAdjust="spacingAndGlyphs">1.07020</text>
<text x="1813" y="295" textLength="42" lengthAdjust="spacingAndGlyphs">1.07000</text>
<text x="1813" y="328" textLength="42" lengthAdjust="spacingAndGlyphs">1.06980</text>
<text x="1813" y="360" textLength="42" lengthAdjust="spacingAndGlyphs">1.06960</text>
<text x="1813" y="425" textLength="42" lengthAdjust="spacingAndGlyphs">1.06920</text>
<text x="1813" y="457" textLength="42" lengthAdjust="spacingAndGlyphs">1.06900</text>
<text x="1813" y="490" textLength="42" lengthAdjust="spacingAndGlyphs">1.06880</text>
<text x="1813" y="521" textLength="42" lengthAdjust="spacingAndGlyphs">1.06860</text>
<text x="1813" y="554" textLength="42" lengthAdjust="spacingAndGlyphs">1.06840</text>
<text x="1813" y="587" textLength="42" lengthAdjust="spacingAndGlyphs">1.06820</text>
<rect x="1805" y="126" width="56" height="17" fill="#000"/>
<rect x="1805" y="194" width="56" height="34" fill="#000"/>
<rect x="1805" y="297" width="56" height="17" fill="#000"/>
<rect x="1805" y="384" width="56" height="17" fill="#f23645"/>
<rect x="1805" y="444" width="56" height="17" fill="#000"/>
<rect x="1805" y="556" width="56" height="34" fill="#000"/>
<g style="font-weight:bold">
<text x="1813" y="135" class="wt" textLength="42" lengthAdjust="spacingAndGlyphs" style="font-weight:bold">1.07100</text>
<text x="1813" y="203" class="wt" textLength="42" lengthAdjust="spacingAndGlyphs" style="font-weight:bold">1.07052</text>
<text x="1813" y="220" class="wt" textLength="42" lengthAdjust="spacingAndGlyphs" style="font-weight:bold">1.07047</text>
<text x="1813" y="306" class="wt" textLength="42" lengthAdjust="spacingAndGlyphs" style="font-weight:bold">1.06994</text>
<text x="1813" y="393" class="wt" textLength="42" lengthAdjust="spacingAndGlyphs" style="font-weight:bold">1.06940</text>
<text x="1813" y="453" class="wt" textLength="42" lengthAdjust="spacingAndGlyphs" style="font-weight:bold">1.06903</text>
<text x="1813" y="565" class="wt" textLength="42" lengthAdjust="spacingAndGlyphs" style="font-weight:bold">1.06834</text>
<text x="1813" y="582" class="wt" textLength="42" lengthAdjust="spacingAndGlyphs" style="font-weight:bold">1.06834</text>
</g>
<circle cx="1793" cy="594" r="9.500" fill="#eef0f4" stroke="#e02b3c" stroke-width="1.600"/>
<path d="M1786 591H1800M1785 596H1801M1787 600H1799" stroke="#e5343f" stroke-width="1.600"/><rect x="1786" y="587" width="7" height="7" fill="#2962b8"/>
<!-- stoch R -->
<text x="996" y="624" class="lt" textLength="32" lengthAdjust="spacingAndGlyphs" style="font-size:14px;font-weight:bold">Stoch</text>
<text x="1033" y="624" textLength="34" lengthAdjust="spacingAndGlyphs" style="font-size:14px">15 3 3</text>
<text x="1075" y="624" style="fill:#b2ebf2;font-weight:bold;font-size:14px" textLength="32" lengthAdjust="spacingAndGlyphs">62.62</text>
<text x="1113" y="624" class="rd" textLength="32" lengthAdjust="spacingAndGlyphs" style="font-weight:bold;font-size:14px">59.67</text>
<use href="#collapse" x="996" y="638"/>
<use href="#tv" transform="translate(999,847) scale(.83)" fill="#d8d9e0"/>
<text x="1813" y="631" textLength="36" lengthAdjust="spacingAndGlyphs">100.00</text>
<text x="1813" y="678" textLength="30" lengthAdjust="spacingAndGlyphs">80.00</text>
<text x="1813" y="773" textLength="30" lengthAdjust="spacingAndGlyphs">40.00</text>
<text x="1813" y="820" textLength="30" lengthAdjust="spacingAndGlyphs">20.00</text>
<text x="1813" y="868" textLength="24" lengthAdjust="spacingAndGlyphs">0.00</text>
<rect x="1805" y="711" width="43" height="17" fill="#b2ebf2"/><rect x="1805" y="728" width="43" height="17" fill="#f23645"/>
<text x="1813" y="720" class="k" textLength="30" lengthAdjust="spacingAndGlyphs">62.62</text>
<text x="1813" y="737" class="wt" textLength="30" lengthAdjust="spacingAndGlyphs" style="font-weight:bold">59.67</text>
<!-- time R -->
<text x="1050" y="893" class="tm" textLength="33" lengthAdjust="spacingAndGlyphs">02:00</text>
<text x="1141" y="893" class="tm" textLength="33" lengthAdjust="spacingAndGlyphs">03:00</text>
<text x="1232" y="893" class="tm" textLength="33" lengthAdjust="spacingAndGlyphs">04:00</text>
<text x="1323" y="893" class="tm" textLength="33" lengthAdjust="spacingAndGlyphs">05:00</text>
<text x="1414" y="893" class="tm" textLength="33" lengthAdjust="spacingAndGlyphs">06:00</text>
<text x="1505" y="893" class="tm" textLength="33" lengthAdjust="spacingAndGlyphs">07:00</text>
<text x="1595" y="893" class="tm" textLength="33" lengthAdjust="spacingAndGlyphs">08:00</text>
<text x="1686" y="893" class="tm" textLength="33" lengthAdjust="spacingAndGlyphs">09:00</text>
<text x="1778" y="893" class="tm" textLength="33" lengthAdjust="spacingAndGlyphs">10:00</text>
<rect x="1805" y="880" width="60" height="27" fill="#131722"/>
<use href="#hex" x="1836" y="894"/>
<!-- replay R -->
<rect x="987" y="908" width="878" height="48" fill="#131722"/>
<rect x="987" y="959" width="878" height="24" fill="#131722"/>
<use href="#rp1" x="1142" y="932"/><use href="#rp2" x="1196" y="932"/><use href="#rp3" x="1234" y="932"/><use href="#rp4" x="1327" y="932"/>
<path d="M1168.500 921V943M1299.500 921V943" stroke="#2a2e39"/>
<text x="1265" y="933" style="fill:#b2b5be;font-size:14px;font-weight:bold" textLength="14" lengthAdjust="spacingAndGlyphs">1x</text>
<rect x="1515" y="918" width="72" height="28" rx="4" fill="#f23645"/>
<rect x="1593" y="918" width="46" height="28" rx="4" fill="#2a2e39"/>
<rect x="1645" y="918" width="72" height="28" rx="4" fill="#2962ff"/>
<rect x="1723.500" y="918.500" width="71" height="27" rx="4" fill="none" stroke="#2a2e39"/>
<text x="1540" y="932" class="wt" style="font-size:14.500px;font-weight:bold" textLength="22" lengthAdjust="spacingAndGlyphs">Sell</text>
<text x="1602" y="932" style="fill:#fff;font-size:14.500px;font-weight:bold" textLength="29" lengthAdjust="spacingAndGlyphs">100K</text>
<text x="1670" y="932" class="wt" style="font-size:14.500px;font-weight:bold" textLength="22" lengthAdjust="spacingAndGlyphs">Buy</text>
<text x="1737" y="932" style="fill:#50535e;font-size:14.500px" textLength="45" lengthAdjust="spacingAndGlyphs">Flatten</text>
<use href="#xx" x="1830" y="932"/>
<!-- bottom R -->
<text x="1002" y="978" class="bb" textLength="15" lengthAdjust="spacingAndGlyphs">1D</text>
<text x="1029" y="978" class="bb" textLength="16" lengthAdjust="spacingAndGlyphs">5D</text>
<text x="1057" y="978" class="bb" textLength="18" lengthAdjust="spacingAndGlyphs">1M</text>
<text x="1087" y="978" class="bb" textLength="18" lengthAdjust="spacingAndGlyphs">3M</text>
<text x="1116" y="978" class="bb" textLength="18" lengthAdjust="spacingAndGlyphs">6M</text>
<text x="1145" y="978" class="bb" textLength="24" lengthAdjust="spacingAndGlyphs">YTD</text>
<text x="1182" y="978" class="bb" textLength="14" lengthAdjust="spacingAndGlyphs">1Y</text>
<text x="1210" y="978" class="bb" textLength="14" lengthAdjust="spacingAndGlyphs">5Y</text>
<text x="1236" y="978" class="bb" textLength="16" lengthAdjust="spacingAndGlyphs">All</text>
<path d="M1263.500 967V983" stroke="#2a2e39"/>
<use href="#calb" x="1287" y="977"/>
<text x="1752" y="978" class="bb" textLength="106" lengthAdjust="spacingAndGlyphs">10:09:16 (UTC-4)</text>
<!-- left toolbar R -->
<use href="#cross" x="957" y="105"/><use href="#line" x="957" y="141"/><use href="#fib" x="957" y="176"/><use href="#brush" x="957" y="213"/><use href="#T" x="957" y="249"/><use href="#patt" x="957" y="285"/><use href="#fore" x="957" y="322"/><use href="#smile" x="957" y="357"/>
<path d="M939 381.500H975M939 466.500H975M939 659.500H975" stroke="#363a45"/>
<use href="#ruler" x="957" y="406"/><use href="#zoom" x="956" y="441"/><use href="#mag" x="957" y="491"/><use href="#plock" x="957" y="526"/><use href="#lock" x="957" y="564"/><use href="#eye" x="957" y="597"/>
<rect x="942" y="620" width="30" height="30" rx="3" fill="#2962ff"/><use href="#link" x="957" y="635"/>
<use href="#trash" x="957" y="685"/>
<!-- right toolbar R -->
<use href="#wl" x="1892" y="104"/><use href="#alarm" x="1892" y="150"/><use href="#note" x="1892" y="197"/><use href="#fire" x="1892" y="243"/><use href="#cal" x="1892" y="289"/><use href="#bulb" x="1892" y="335"/>
<path d="M1875 363.500H1908M1875 602.500H1908" stroke="#363a45"/>
<use href="#cloud" x="1892" y="392"/><use href="#chat" x="1892" y="436"/><use href="#bulbw" x="1892" y="482"/><use href="#playw" x="1892" y="528"/><use href="#bell" x="1892" y="574"/><use href="#chev" x="1892" y="632"/><use href="#dots" x="1892" y="677"/><use href="#layers" x="1892" y="968"/>
</svg>
</body></html>
